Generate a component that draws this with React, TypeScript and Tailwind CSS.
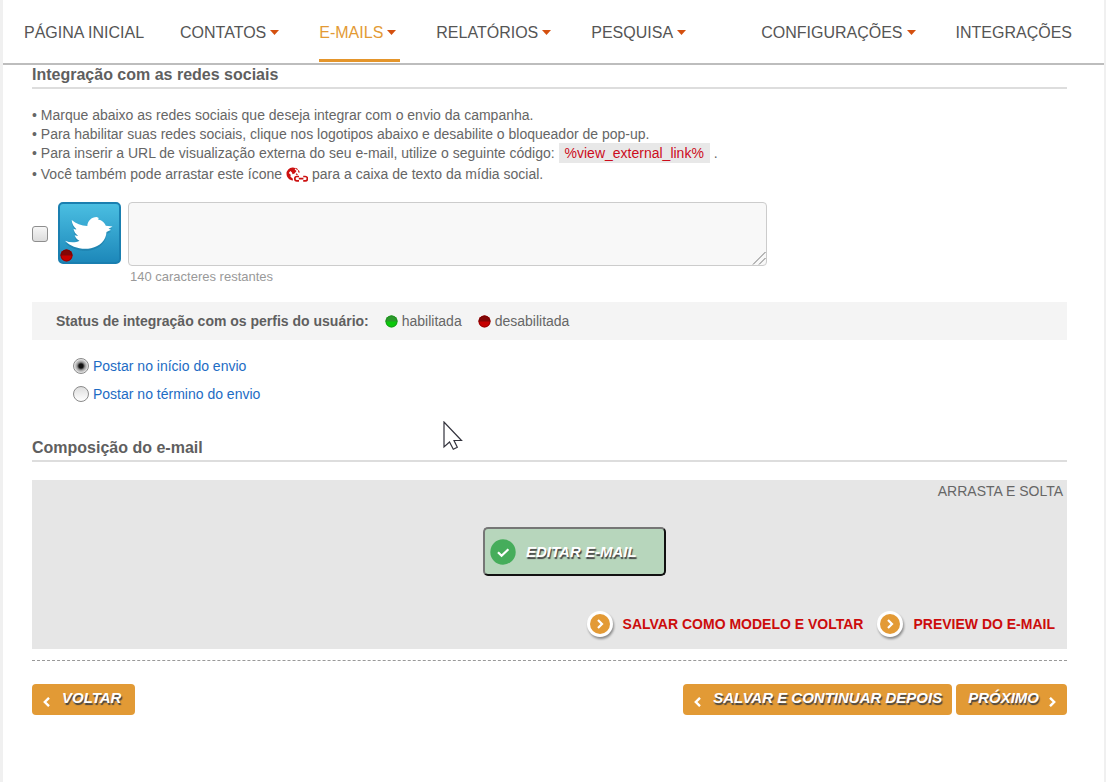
import { useState } from 'react';

interface NavItem {
  label: string;
  menu?: boolean;
  active?: boolean;
}

const mainNav: NavItem[] = [
  { label: 'PÁGINA INICIAL' },
  { label: 'CONTATOS', menu: true },
  { label: 'E-MAILS', menu: true, active: true },
  { label: 'RELATÓRIOS', menu: true },
  { label: 'PESQUISA', menu: true },
];

const sideNav: NavItem[] = [
  { label: 'CONFIGURAÇÕES', menu: true },
  { label: 'INTEGRAÇÕES' },
];

const postOptions = [
  { value: 'start', label: 'Postar no início do envio' },
  { value: 'end', label: 'Postar no término do envio' },
];

const MAX_CHARS = 140;

function NavLinks({ items }: { items: NavItem[] }) {
  return (
    <ul className="flex gap-9">
      {items.map((item) => (
        <li key={item.label} className="flex">
          <a
            href="#"
            className={`flex items-center gap-1 border-b-3 pt-1.5 whitespace-nowrap ${item.menu ? 'pr-1' : ''} ${
              item.active ? 'border-[#e4952b] text-[#e39a35]' : 'border-transparent text-[#555]'
            }`}
          >
            {item.label}
            {item.menu && (
              <svg width="9" height="5" viewBox="0 0 9 5" aria-hidden="true">
                <path d="M0 0h9L4.500 5z" fill="#d4500f" />
              </svg>
            )}
          </a>
        </li>
      ))}
    </ul>
  );
}

function SectionTitle({ children }: { children: string }) {
  return <h2 className="border-b-2 border-[#ddd] pb-0.5 text-base leading-5 font-bold text-[#5f5f5f]">{children}</h2>;
}

function StatusDot({ on = false }: { on?: boolean }) {
  return (
    <svg width="13" height="13" viewBox="0 0 13 13" className="shrink-0" aria-hidden="true">
      <circle cx="6.500" cy="6.500" r="6" fill={on ? '#0bc80b' : '#c60000'} />
      <path d="M.5 6.500a6 6 0 0 1 12 0z" fill={on ? '#2a9a2a' : '#830606'} />
      <circle cx="6.500" cy="6.500" r="5.500" fill="none" stroke={on ? '#1f7f1f' : '#700'} strokeOpacity=".6" />
    </svg>
  );
}

function GlobeLinkIcon() {
  return (
    <svg width="22" height="16" viewBox="0 0 22 16" className="mx-1 inline-block align-[-4px]" aria-hidden="true">
      <path
        d="M6.500.5A6.200 6.200 0 0 0 .5 6.800C.5 10.300 3.200 13.300 7 13.500l-.3-2-2.200-1.800.2-2L2.800 6l1.600-2L6 5.500l.5 1.800 2-.8L10.500 4 8.700 2.500 9.500 1.200C8.500.7 7.500.4 6.500.5z"
        fill="#c11"
      />
      <path d="M9.500 1.200c2.300 1 3.700 2.900 3.800 5.300M10 6.800l1.500 1" fill="none" stroke="#c11" strokeWidth="1.200" strokeDasharray="2.500 1" />
      <path d="M13 9.500h-2a2.200 2.200 0 0 0 0 4.400h2M17.200 9.500h2a2.200 2.200 0 0 1 0 4.400h-2M12.800 11.700h4.600" fill="none" stroke="#c11" strokeWidth="1.700" />
    </svg>
  );
}

function TwitterLogo() {
  const bird =
    'M7 38.700c5 2 10.500 2 14.500 0-2.500-1-4-2.800-4.800-5.400 1.200.5 2.300.6 3.300.3-2.500-1.600-4-4-4.500-6.900 1 .6 2 .8 3 .6-2.800-2.500-4.500-5.500-4.800-9.300 4.300 3.800 9.500 5.500 15.600 6 .3-5 4-9 9.400-9l2 1-.6 1.500 2.700.8c2.700 1.500 4.200 3.200 5 5.500l6.700.7-4 2.300 2.500 1-4.500 2.200c-.4 8-6.500 14.500-15.500 16.200-9.500 1.800-20-1-26-7.500z';
  return (
    <svg width="63" height="62" viewBox="0 0 63 62" className="block" aria-hidden="true">
      <defs>
        <linearGradient id="tw-bg" x1="0" y1="0" x2="0" y2="1">
          <stop offset="0" stopColor="#4bbfe2" />
          <stop offset="1" stopColor="#1c87b9" />
        </linearGradient>
      </defs>
      <rect x="1" y="1" width="61" height="60" rx="4" fill="url(#tw-bg)" stroke="#1a7fb0" strokeWidth="2" />
      <path d={bird} fill="#125f88" opacity=".3" transform="translate(0 2)" />
      <path d={bird} fill="#fff" />
    </svg>
  );
}

function Chevron({ flip = false }: { flip?: boolean }) {
  return (
    <svg width="7" height="10" viewBox="0 0 7 10" className={`mt-1 shrink-0 ${flip ? 'rotate-180' : ''}`} aria-hidden="true">
      <path d="M6 .8 1.800 5 6 9.200" fill="none" stroke="#fff" strokeWidth="2.400" />
    </svg>
  );
}

function RoundArrow() {
  return (
    <svg width="30" height="30" viewBox="0 0 30 30" className="shrink-0 drop-shadow-[1px_2px_1px_rgba(0,0,0,0.4)]" aria-hidden="true">
      <circle cx="15" cy="15" r="13" fill="#fff" />
      <circle cx="15" cy="15" r="10" fill="#e39a35" />
      <path d="m13 11 4 4-4 4" fill="none" stroke="#fff" strokeWidth="2.200" />
    </svg>
  );
}

function ActionLink({ label }: { label: string }) {
  return (
    <a href="#" className="flex items-center gap-2 text-sm font-bold text-[#cc0c0c]">
      <RoundArrow />
      {label}
    </a>
  );
}

const stepButton =
  'flex h-[31px] items-center rounded-sm bg-[#e29a35] text-[15px] leading-5 font-bold text-white italic';
const stepLabel = 'pb-1 whitespace-nowrap [text-shadow:1px_2px_1px_#444]';

export default function App() {
  const [message, setMessage] = useState('');
  const [postWhen, setPostWhen] = useState('start');

  return (
    <div className="min-h-screen bg-[#f0f0f0] pr-0.5 pl-[3px] font-['Liberation_Sans',Arial,sans-serif] text-sm text-[#666]">
      <div className="min-h-screen bg-white">
        <header className="border-b-2 border-[#bdbdbd]">
          <nav className="flex h-[63px] justify-between pr-8 pb-px pl-[21px] text-base">
            <NavLinks items={mainNav} />
            <NavLinks items={sideNav} />
          </nav>
        </header>

        <main className="pr-[37px] pl-[29px]">
          <SectionTitle>Integração com as redes sociais</SectionTitle>

          <ul className="mt-[17px] leading-[19px]">
            <li>• Marque abaixo as redes sociais que deseja integrar com o envio da campanha.</li>
            <li>• Para habilitar suas redes sociais, clique nos logotipos abaixo e desabilite o bloqueador de pop-up.</li>
            <li>
              • Para inserir a URL de visualização externa do seu e-mail, utilize o seguinte código:{' '}
              <code className="bg-[#e8e8e8] px-1.5 py-0.5 font-['Liberation_Sans',Arial,sans-serif] text-[#cc0c1c]">
                %view_external_link%
              </code>{' '}
              .
            </li>
            <li className="pt-0.5">
              • Você também pode arrastar este ícone
              <GlobeLinkIcon />
              para a caixa de texto da mídia social.
            </li>
          </ul>

          <div className="mt-[18px] flex items-start">
            <input
              id="use-twitter"
              type="checkbox"
              aria-label="Twitter"
              className="mt-6 size-4 shrink-0 appearance-none rounded-[3px] border border-[#8e8e8e] bg-linear-to-b from-[#f6f6f6] to-[#dcdcdc] checked:bg-[#888]"
            />
            <label htmlFor="use-twitter" className="relative ml-2.5 shrink-0">
              <TwitterLogo />
              <span className="absolute bottom-0.5 left-0.5">
                <StatusDot />
              </span>
            </label>
            <div className="ml-[7px] w-[639px]">
              <div className="relative">
                <textarea
                  aria-label="Mensagem"
                  maxLength={MAX_CHARS}
                  value={message}
                  onChange={(e) => setMessage(e.target.value)}
                  className="block h-16 w-full resize-none rounded-sm border border-[#ccc] bg-[#f8f8f8] p-1"
                />
                <svg width="14" height="14" viewBox="0 0 14 14" className="pointer-events-none absolute right-px bottom-px" aria-hidden="true">
                  <path d="M1 13.500 13.500 1M7 13.500 13.500 7" fill="none" stroke="#777" />
                </svg>
              </div>
              <p className="mt-px pl-0.5 text-[13px] leading-5 text-[#999]">{MAX_CHARS - message.length} caracteres restantes</p>
            </div>
          </div>

          <div className="mt-[15px] flex h-[38px] items-center bg-[#f4f4f4] px-6">
            <strong className="text-[#5f5f5f]">Status de integração com os perfis do usuário:</strong>
            <span className="ml-4 flex items-center gap-1">
              <StatusDot on />
              habilitada
            </span>
            <span className="ml-4 flex items-center gap-1">
              <StatusDot />
              desabilitada
            </span>
          </div>

          <fieldset className="mt-3 pl-[41px]">
            {postOptions.map((option) => (
              <label key={option.value} className="flex h-7 items-center gap-1 text-[#1d6cc4]">
                <input
                  type="radio"
                  name="post-when"
                  value={option.value}
                  checked={postWhen === option.value}
                  onChange={() => setPostWhen(option.value)}
                  className="size-4 appearance-none rounded-full border border-[#8a8a8a] bg-linear-to-b from-[#ddd] to-white checked:bg-[radial-gradient(circle,#111_0_2px,#999_4px,#eee_7px)]"
                />
                {option.label}
              </label>
            ))}
          </fieldset>

          <div className="mt-[30px]">
            <SectionTitle>Composição do e-mail</SectionTitle>
          </div>

          <section className="mt-[18px] bg-[#e6e6e6] pt-0.5 pb-2.5">
            <p className="pr-1 text-right leading-[18px]">ARRASTA E SOLTA</p>
            <div className="mt-[27px] flex justify-center pl-[50px]">
              <button
                type="button"
                className="flex h-[49px] w-[183px] items-center gap-2.5 rounded-[5px] border-2 border-t-[#767676] border-r-[#111] border-b-[#111] border-l-[#767676] bg-[#b7d6bc] pl-[5px] text-[15px] font-bold text-white italic"
              >
                <svg width="26" height="26" viewBox="0 0 26 26" className="shrink-0" aria-hidden="true">
                  <circle cx="13" cy="13" r="12.700" fill="#46ad5b" />
                  <path d="m8 13.200 3.600 3.600 6.800-6.600" fill="none" stroke="#fff" strokeWidth="2.200" />
                </svg>
                <span className="whitespace-nowrap [text-shadow:1px_2px_1px_#444]">EDITAR E-MAIL</span>
              </button>
            </div>
            <div className="mt-[33px] flex justify-end gap-3 pr-3">
              <ActionLink label="SALVAR COMO MODELO E VOLTAR" />
              <ActionLink label="PREVIEW DO E-MAIL" />
            </div>
          </section>

          <hr className="mt-[11px] border-t border-dashed border-[#999]" />

          <div className="mt-[23px] flex justify-between pb-8">
            <button type="button" className={`${stepButton} gap-3 pr-3.5 pl-[11px]`}>
              <Chevron />
              <span className={stepLabel}>VOLTAR</span>
            </button>
            <div className="flex gap-1">
              <button type="button" className={`${stepButton} gap-3 pr-2.5 pl-[11px]`}>
                <Chevron />
                <span className={stepLabel}>SALVAR E CONTINUAR DEPOIS</span>
              </button>
              <button type="button" className={`${stepButton} gap-2.5 pr-[11px] pl-3`}>
                <span className={stepLabel}>PRÓXIMO</span>
                <Chevron flip />
              </button>
            </div>
          </div>
        </main>
      </div>

      {/* mouse pointer */}
      <svg width="20" height="30" viewBox="0 0 20 30" className="pointer-events-none absolute top-[421px] left-[443px]" aria-hidden="true">
        <path d="M1 1v25l5.500-5 3.800 7.200 4-2-3.300-6.700h7.500z" fill="#fff" stroke="#33333d" strokeWidth="1.200" />
      </svg>
    </div>
  );
}
